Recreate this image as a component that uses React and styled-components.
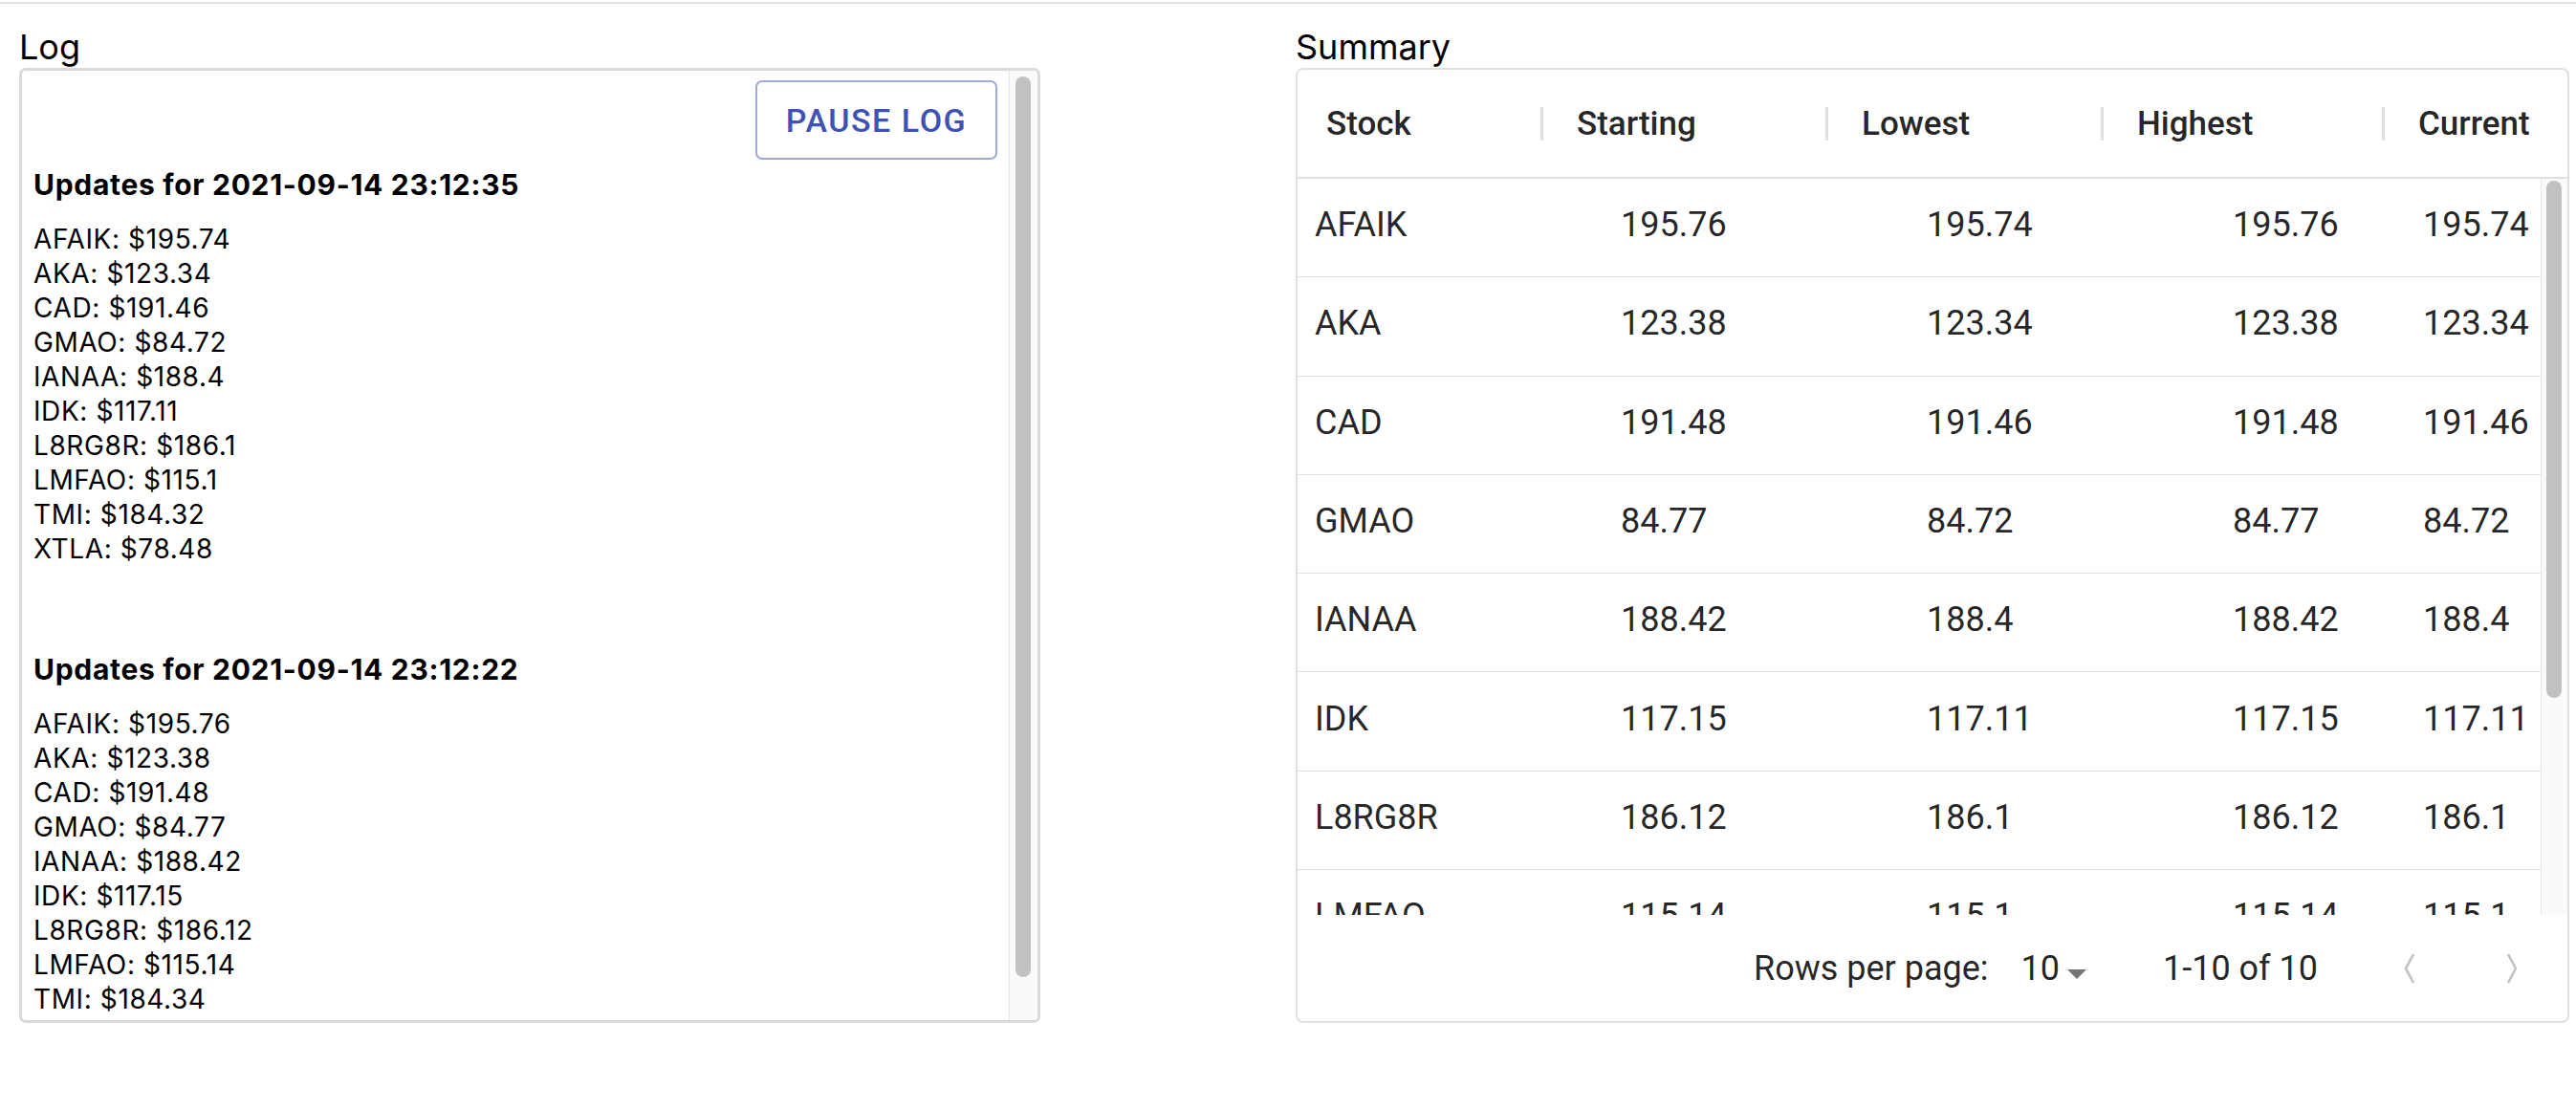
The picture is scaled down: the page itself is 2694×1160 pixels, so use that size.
import React from 'react';
import styled, { createGlobalStyle } from 'styled-components';

const logBlocks = [
	{
		time: '2021-09-14 23:12:35',
		prices: [
			['AFAIK', '195.74'],
			['AKA', '123.34'],
			['CAD', '191.46'],
			['GMAO', '84.72'],
			['IANAA', '188.4'],
			['IDK', '117.11'],
			['L8RG8R', '186.1'],
			['LMFAO', '115.1'],
			['TMI', '184.32'],
			['XTLA', '78.48'],
		],
	},
	{
		time: '2021-09-14 23:12:22',
		prices: [
			['AFAIK', '195.76'],
			['AKA', '123.38'],
			['CAD', '191.48'],
			['GMAO', '84.77'],
			['IANAA', '188.42'],
			['IDK', '117.15'],
			['L8RG8R', '186.12'],
			['LMFAO', '115.14'],
			['TMI', '184.34'],
			['XTLA', '78.5'],
		],
	},
];

const summary = [
	['AFAIK', '195.76', '195.74', '195.76', '195.74'],
	['AKA', '123.38', '123.34', '123.38', '123.34'],
	['CAD', '191.48', '191.46', '191.48', '191.46'],
	['GMAO', '84.77', '84.72', '84.77', '84.72'],
	['IANAA', '188.42', '188.4', '188.42', '188.4'],
	['IDK', '117.15', '117.11', '117.15', '117.11'],
	['L8RG8R', '186.12', '186.1', '186.12', '186.1'],
	['LMFAO', '115.14', '115.1', '115.14', '115.1'],
	['TMI', '184.34', '184.32', '184.34', '184.32'],
	['XTLA', '78.5', '78.48', '78.5', '78.48'],
];

const headers = ['Stock', 'Starting', 'Lowest', 'Highest', 'Current'];

// fake scrollbar so it shows the same in every browser
const ScrollBar = ({ width, top, length, inset }) => (
	<Track width={width}>
		<Thumb top={top} length={length} inset={inset} />
	</Track>
);

function App() {
	return (
		<Page>
			<GlobalStyle />
			<TopRule />
			<Columns>
				<LogColumn>
					<Title>Log</Title>
					<LogBox>
						<LogContent>
							<Toolbar>
								<OutlinedButton>PAUSE LOG</OutlinedButton>
							</Toolbar>
							{logBlocks.map((block, i) => (
								<LogBlock key={block.time} first={i === 0}>
									<LogHeading>Updates for {block.time}</LogHeading>
									<LogList>
										{block.prices.map(([name, price]) => (
											<LogLine key={name}>
												{name}: ${price}
											</LogLine>
										))}
									</LogList>
								</LogBlock>
							))}
						</LogContent>
						<ScrollBar width={30} top={6} length={942} inset={6} />
					</LogBox>
				</LogColumn>

				<SummaryColumn>
					<Title>Summary</Title>
					<Grid>
						<HeaderRow>
							{headers.map((h, i) => (
								<HeaderCell key={h} first={i === 0}>
									{i > 0 && <Separator />}
									<HeaderLabel first={i === 0}>{h}</HeaderLabel>
								</HeaderCell>
							))}
						</HeaderRow>
						<Body>
							<Rows>
								{summary.map(row => (
									<Row key={row[0]}>
										{row.map((v, i) => (
											<Cell key={i}>{v}</Cell>
										))}
									</Row>
								))}
							</Rows>
							<ScrollBar width={28} top={2} length={541} inset={5} />
						</Body>
						<Footer>
							<FooterText>Rows per page:</FooterText>
							<PageSize>
								10
								<svg width="48" height="48" viewBox="0 0 24 24">
									<path d="M7 10l5 5 5-5z" fill="#757575" />
								</svg>
							</PageSize>
							<FooterText last>1-10 of 10</FooterText>
							<Pager>
								<svg width="22" height="38" viewBox="0 0 22 38">
									<polyline points="15,4 7,19 15,34" fill="none" stroke="#c2c2c2" strokeWidth="2.6" />
								</svg>
							</Pager>
							<Pager>
								<svg width="22" height="38" viewBox="0 0 22 38">
									<polyline points="7,4 15,19 7,34" fill="none" stroke="#c2c2c2" strokeWidth="2.6" />
								</svg>
							</Pager>
						</Footer>
					</Grid>
				</SummaryColumn>
			</Columns>
		</Page>
	);
}

export default App;

const GlobalStyle = createGlobalStyle`
	html, body {
		margin: 0;
		padding: 0;
		background: #fff;
	}
	body {
		font-family: Inter, 'Liberation Sans', sans-serif;
		color: #000;
	}
`;

const Page = styled.div`
	width: 2694px;
	height: 1160px;
	padding-top: 2px;
	box-sizing: border-box;
`;

const TopRule = styled.div`
	height: 2px;
	background: #e0e0e8;
`;

const Columns = styled.div`
	display: flex;
	margin-top: 23px;
	padding-left: 20px;
	padding-right: 7px;
	justify-content: space-between;
`;

const LogColumn = styled.div`
	width: 1068px;
	display: flex;
	flex-direction: column;
`;

const SummaryColumn = styled.div`
	width: 1332px;
	display: flex;
	flex-direction: column;
`;

const Title = styled.div`
	font-family: Inter, 'Liberation Sans', sans-serif;
	font-size: 36px;
	line-height: 44px;
	color: #000;
`;

const Track = styled.div`
	width: ${p => p.width}px;
	flex-shrink: 0;
	box-sizing: border-box;
	background: #fafafa;
	border-left: 1px solid #e6e6e6;
`;

const Thumb = styled.div`
	width: 16px;
	height: ${p => p.length}px;
	margin-top: ${p => p.top}px;
	margin-left: ${p => p.inset}px;
	border-radius: 8px;
	background: #c1c1c1;
`;

const LogBox = styled.div`
	height: 999px;
	box-sizing: border-box;
	border: 3px solid #dadada;
	border-radius: 7px;
	display: flex;
	overflow: hidden;
`;

const LogContent = styled.div`
	flex: 1;
	padding: 10px 12px;
	overflow: hidden;
`;

const Toolbar = styled.div`
	display: flex;
	justify-content: flex-end;
`;

const OutlinedButton = styled.button`
	width: 253px;
	height: 83px;
	box-sizing: border-box;
	background: #fff;
	border: 2px solid #9fa8da;
	border-radius: 7px;
	color: #3f51b5;
	font-family: Roboto, sans-serif;
	font-weight: 500;
	font-size: 34px;
	letter-spacing: 0.045em;
	cursor: pointer;
`;

const LogBlock = styled.div`
	margin-top: ${p => (p.first ? '8px' : '90px')};
`;

const LogHeading = styled.div`
	font-size: 30px;
	line-height: 36px;
	font-weight: 700;
	letter-spacing: 0.7px;
`;

const LogList = styled.div`
	margin-top: 21px;
`;

const LogLine = styled.div`
	font-size: 28px;
	line-height: 36px;
	letter-spacing: 0.6px;
`;

const Grid = styled.div`
	height: 999px;
	box-sizing: border-box;
	border: 2px solid #e0e0e0;
	border-radius: 8px;
	display: flex;
	flex-direction: column;
	font-family: Roboto, sans-serif;
	color: rgba(0, 0, 0, 0.87);
	overflow: hidden;
`;

const HeaderRow = styled.div`
	height: 112px;
	flex-shrink: 0;
	display: grid;
	grid-template-columns: 254px 298px 288px 294px 1fr;
	border-bottom: 2px solid #e0e0e0;
`;

const HeaderCell = styled.div`
	display: flex;
	align-items: center;
	padding-left: ${p => (p.first ? '30px' : '0')};
`;

const Separator = styled.div`
	width: 3px;
	height: 35px;
	background: #e0e0e0;
`;

const HeaderLabel = styled.span`
	font-size: 35px;
	font-weight: 500;
	margin-left: ${p => (p.first ? '0' : '35px')};
`;

const Body = styled.div`
	flex: 1;
	display: flex;
	overflow: hidden;
`;

const Rows = styled.div`
	flex: 1;
	overflow: hidden;
`;

const Row = styled.div`
	height: 103.3px;
	box-sizing: border-box;
	display: grid;
	grid-template-columns: 320px 320px 320px 199px 1fr;
	align-items: center;
	border-bottom: 1.5px solid #e0e0e0;
	padding-bottom: 6px;
`;

const Cell = styled.div`
	padding-left: 18px;
	font-size: 36px;
	white-space: nowrap;
	overflow: hidden;
`;

const Footer = styled.div`
	height: 111px;
	flex-shrink: 0;
	display: flex;
	align-items: center;
	justify-content: flex-end;
	padding-right: 38px;
`;

const FooterText = styled.span`
	font-size: 36px;
	margin-right: ${p => (p.last ? '76px' : '34px')};
`;

const PageSize = styled.span`
	display: flex;
	align-items: center;
	font-size: 36px;
	margin-right: 66px;
	svg {
		margin-top: 10px;
		margin-left: -6px;
	}
`;

const Pager = styled.span`
	display: flex;
	align-items: center;
	justify-content: center;
	width: 40px;
	& + & {
		margin-left: 67px;
	}
`;
